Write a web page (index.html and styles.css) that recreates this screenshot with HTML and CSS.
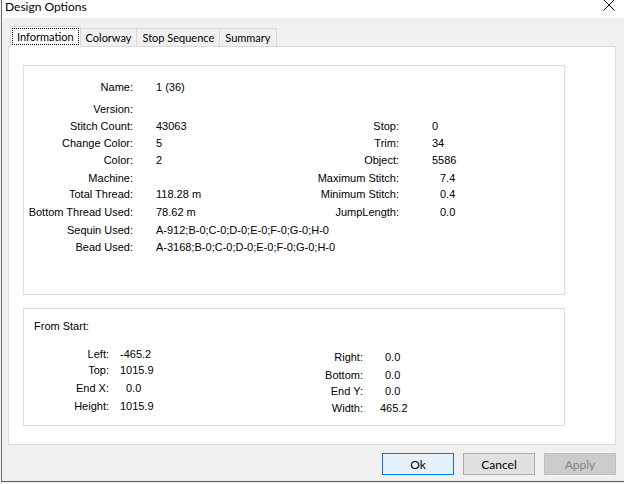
FILE: index.html
```html
<!DOCTYPE html>
<html lang="en">
<head>
    <meta charset="UTF-8">
    <title>Design Options</title>
    <link rel="stylesheet" href="styles.css">
</head>
<body>
    <div class="window">
        <div class="titlebar">
            <span class="title">Design Options</span>
            <svg class="close" width="12" height="12" viewBox="0 0 12 12">
                <path d="M0.5 0.5 L11.5 11.5 M11.5 0.5 L0.5 11.5" stroke="#111" stroke-width="1" fill="none"/>
            </svg>
        </div>
        <div class="client">
            <div class="tabs">
                <div class="tab active"><span class="focus">Information</span></div>
                <div class="tab">Colorway</div>
                <div class="tab">Stop Sequence</div>
                <div class="tab">Summary</div>
            </div>
            <div class="panel">
                <div class="group info">
                    <div class="lbl">Name:</div><div class="val">1 (36)</div><div></div><div></div>
                    <div class="lbl">Version:</div><div class="val"></div><div></div><div></div>
                    <div class="lbl">Stitch Count:</div><div class="val">43063</div><div class="lbl2">Stop:</div><div class="val2">0</div>
                    <div class="lbl">Change Color:</div><div class="val">5</div><div class="lbl2">Trim:</div><div class="val2">34</div>
                    <div class="lbl">Color:</div><div class="val">2</div><div class="lbl2">Object:</div><div class="val2">5586</div>
                    <div class="lbl">Machine:</div><div class="val"></div><div class="lbl2">Maximum Stitch:</div><div class="val2 num">7.4</div>
                    <div class="lbl">Total Thread:</div><div class="val">118.28 m</div><div class="lbl2">Minimum Stitch:</div><div class="val2 num">0.4</div>
                    <div class="lbl">Bottom Thread Used:</div><div class="val">78.62 m</div><div class="lbl2">JumpLength:</div><div class="val2 num">0.0</div>
                    <div class="lbl">Sequin Used:</div><div class="val wide">A-912;B-0;C-0;D-0;E-0;F-0;G-0;H-0</div>
                    <div class="lbl">Bead Used:</div><div class="val wide">A-3168;B-0;C-0;D-0;E-0;F-0;G-0;H-0</div>
                </div>
                <div class="group extents">
                    <div class="caption">From Start:</div>
                    <div class="extent-cols">
                        <div class="extent left">
                            <div class="elbl">Left:</div><div class="eval">-465.2</div>
                            <div class="elbl">Top:</div><div class="eval">1015.9</div>
                            <div class="elbl">End X:</div><div class="eval indent">0.0</div>
                            <div class="elbl">Height:</div><div class="eval">1015.9</div>
                        </div>
                        <div class="extent right">
                            <div class="elbl">Right:</div><div class="eval indent">0.0</div>
                            <div class="elbl">Bottom:</div><div class="eval indent">0.0</div>
                            <div class="elbl">End Y:</div><div class="eval indent">0.0</div>
                            <div class="elbl">Width:</div><div class="eval">465.2</div>
                        </div>
                    </div>
                </div>
            </div>
            <div class="buttons">
                <button class="btn default">Ok</button>
                <button class="btn">Cancel</button>
                <button class="btn disabled">Apply</button>
            </div>
        </div>
    </div>
</body>
</html>
```

FILE: styles.css
```css
html, body {
    margin: 0;
    padding: 0;
}
body {
    width: 624px;
    height: 484px;
    overflow: hidden;
    background: #f4f4f4;
    font-family: 'Liberation Sans', Arial, sans-serif;
    font-size: 11px;
    color: #000;
}
.window {
    margin-left: 1px;
    border-left: 1px solid #6a6a6a;
    border-bottom: 1px solid #5a5a5a;
    display: flex;
    flex-direction: column;
    box-sizing: border-box;
    height: 482px;
}
.titlebar {
    height: 18px;
    background: #fff;
    display: flex;
    align-items: flex-start;
    justify-content: space-between;
    font-family: Lato, 'Noto Sans', sans-serif;
    font-size: 12px;
}
.title {
    padding-left: 3px;
    line-height: 13px;
}
.close {
    margin-right: 9px;
    margin-top: -1px;
}
.client {
    flex: 1;
    background: #f0f0f0;
    padding: 8px 8px 0 6px;
    display: flex;
    flex-direction: column;
}

/* tab strip */
.tabs {
    display: flex;
    align-items: flex-end;
    padding-left: 2px;
    font-family: Lato, 'Noto Sans', sans-serif;
    font-size: 11px;
    position: relative;
    z-index: 1;
}
.tab {
    height: 17px;
    line-height: 18px;
    padding: 0 5px;
    border: 1px solid #d9d9d9;
    border-bottom: none;
    margin-left: -1px;
    background: #f0f0f0;
}
.tab:first-of-type {
    margin-left: 0;
}
.tab.active {
    height: 20px;
    background: #fff;
    padding: 0 1px;
    margin-bottom: -1px;
    position: relative;
    z-index: 2;
}
.focus {
    display: block;
    margin-top: 1px;
    padding: 0 4px;
    line-height: 15px;
    border: 1px dotted #000;
}
.panel {
    height: 399px;
    box-sizing: border-box;
    background: #fff;
    border: 1px solid #d9d9d9;
    padding: 18px 50px 0 14px;
    display: flex;
    flex-direction: column;
    gap: 13px;
}
.group {
    border: 1px solid #dcdcdc;
    box-sizing: border-box;
}

/* design information grid */
.info {
    height: 230px;
    padding-top: 13px;
    display: grid;
    grid-template-columns: 109px 167px 99px 1fr;
    grid-template-rows: 22px 17px 17px 17px 18px 16px 18px 18px 17px 17px;
    align-items: start;
    line-height: 17px;
}
.lbl, .lbl2 {
    text-align: right;
    white-space: nowrap;
}
.val {
    padding-left: 23px;
    white-space: nowrap;
}
.val.wide {
    grid-column: 2 / 5;
}
.val2 {
    padding-left: 33px;
}
.val2.num {
    padding-left: 41px;
}

/* extents group */
.extents {
    height: 118px;
    padding: 9px 0 0 10px;
    line-height: 17px;
}
.extent-cols {
    display: flex;
    margin-top: 11px;
}
.extent {
    display: grid;
    grid-template-columns: 75px auto;
    align-items: start;
}
.extent.left {
    width: 216px;
    grid-template-rows: 16px 18px 18px 17px;
}
.extent.right {
    margin-top: 3px;
    grid-template-columns: 113px auto;
    grid-template-rows: 18px 16px 17px 17px;
}
.elbl {
    text-align: right;
}
.eval {
    padding-left: 11px;
}
.extent.right .eval {
    padding-left: 17px;
}
.eval.indent {
    padding-left: 17px;
}
.extent.right .eval.indent {
    padding-left: 22px;
}

/* dialog buttons */
.buttons {
    display: flex;
    justify-content: flex-end;
    gap: 9px;
    margin-top: 8px;
}
.btn {
    width: 72px;
    height: 22px;
    padding: 0;
    font-family: Lato, 'Noto Sans', sans-serif;
    font-size: 12px;
    color: #000;
    background: #e1e1e1;
    border: 1px solid #adadad;
}
.btn.default {
    background: #e5f1fb;
    border-color: #0078d7;
}
.btn.disabled {
    background: #cccccc;
    border-color: #bfbfbf;
    color: #838383;
}
```
